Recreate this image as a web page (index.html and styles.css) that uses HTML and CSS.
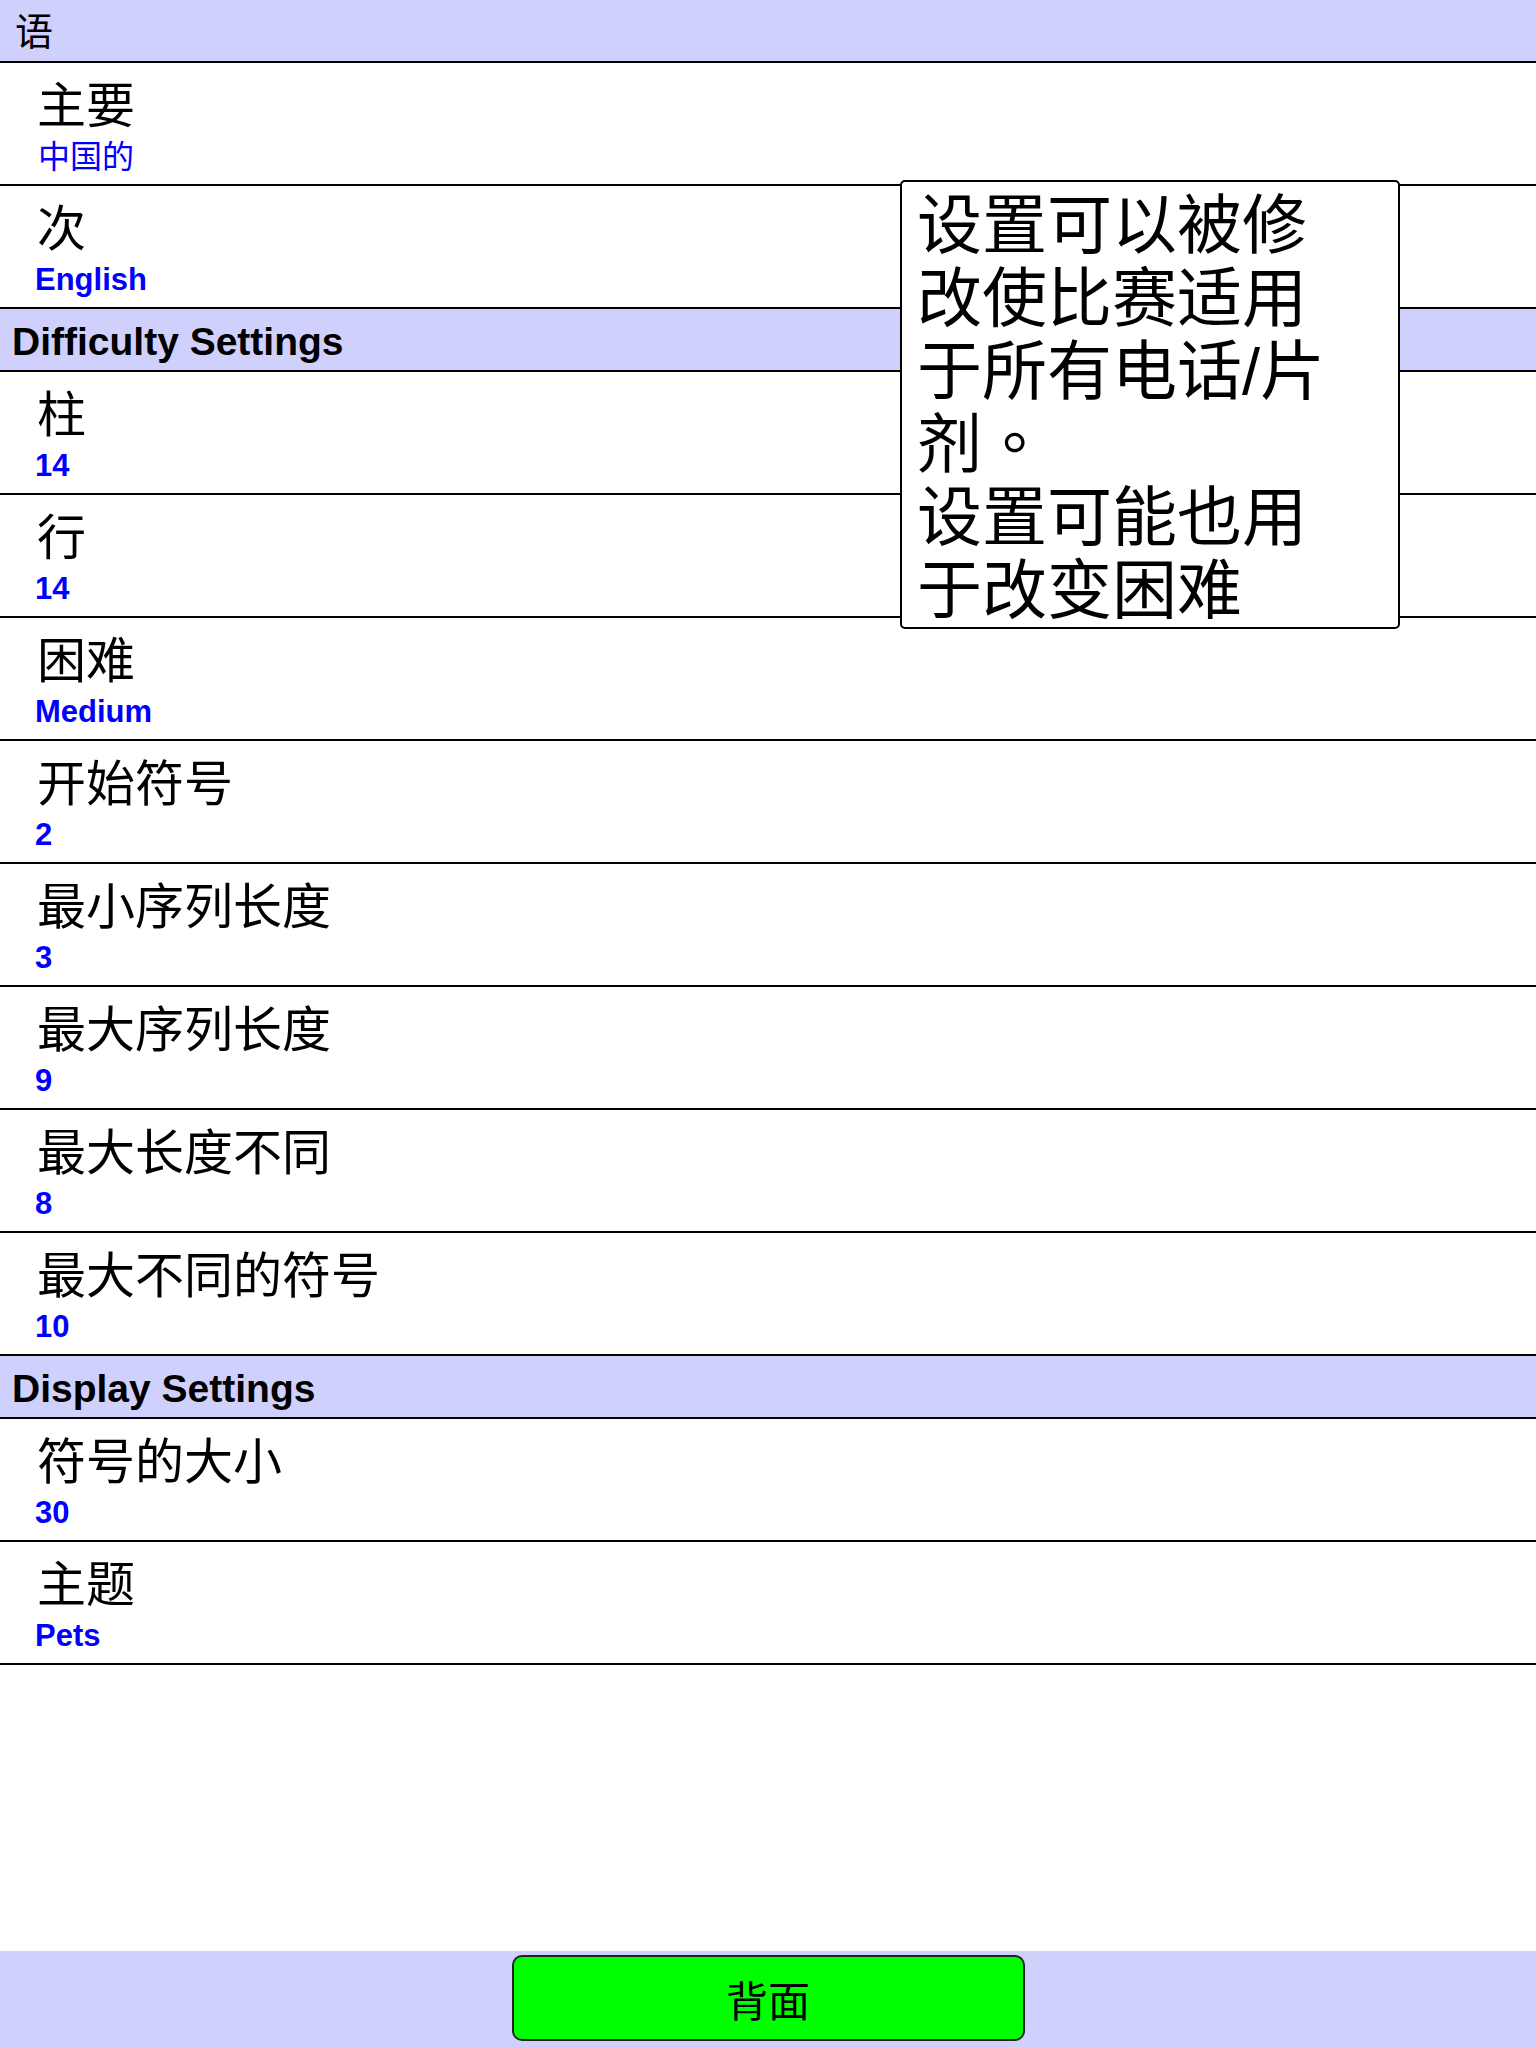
FILE: index.html
```html
<!DOCTYPE html>
<html lang="zh">
<head>
<meta charset="utf-8">
<title>Settings</title>
<link rel="stylesheet" href="styles.css">
</head>
<body>
<div class="page">
  <div class="list">
    <div class="section section-plain">语</div>
    <div class="row"><div class="label">主要</div><div class="value value-plain">中国的</div></div>
    <div class="row"><div class="label">次</div><div class="value">English</div></div>
    <div class="section">Difficulty Settings</div>
    <div class="row"><div class="label">柱</div><div class="value">14</div></div>
    <div class="row"><div class="label">行</div><div class="value">14</div></div>
    <div class="row"><div class="label">困难</div><div class="value">Medium</div></div>
    <div class="row"><div class="label">开始符号</div><div class="value">2</div></div>
    <div class="row"><div class="label">最小序列长度</div><div class="value">3</div></div>
    <div class="row"><div class="label">最大序列长度</div><div class="value">9</div></div>
    <div class="row"><div class="label">最大长度不同</div><div class="value">8</div></div>
    <div class="row"><div class="label">最大不同的符号</div><div class="value">10</div></div>
    <div class="section">Display Settings</div>
    <div class="row"><div class="label">符号的大小</div><div class="value">30</div></div>
    <div class="row"><div class="label">主题</div><div class="value">Pets</div></div>
  </div>
  <div class="tooltip">设置可以被修改使比赛适用于所有电话/片剂<span class="stop" lang="zh-TW">。</span><br>设置可能也用于改变困难</div>
  <div class="footer"><button class="back">背面</button></div>
</div>
</body>
</html>
```
FILE: styles.css
```css
body {
  margin: 0;
  background: #ffffff;
  color: #000000;
  font-family: "Liberation Sans", "Noto Sans CJK SC", sans-serif;
}

.page {
  position: relative;
  min-height: 2048px;
  display: flex;
  flex-direction: column;
}

.list {
  flex: 1;
}

.section {
  box-sizing: border-box;
  height: 63px;
  padding: 4px 0 0 12px;
  line-height: 57px;
  font-size: 39px;
  font-weight: bold;
  background: #d0d0fc;
  border-bottom: 2px solid #000000;
}

.section-plain {
  padding-left: 15px;
  font-size: 38px;
  font-weight: normal;
}

.row {
  box-sizing: border-box;
  height: 123px;
  padding: 14px 0 0 35px;
  border-bottom: 2px solid #000000;
}

.label {
  padding-left: 2px;
  font-size: 49px;
  line-height: 58px;
}

.value {
  font-size: 31px;
  line-height: 44px;
  font-weight: bold;
  color: #0000ff;
}

.value-plain {
  padding-left: 3px;
  font-size: 32px;
  font-weight: normal;
}

.tooltip {
  position: absolute;
  left: 900px;
  top: 180px;
  width: 425px;
  padding: 7px 56px 0 15px;
  font-size: 65px;
  line-height: 73px;
  background: #ffffff;
  border: 2px solid #000000;
  border-radius: 5px;
}

.stop {
  font-family: "Liberation Sans", "Noto Sans CJK TC", sans-serif;
}

.footer {
  box-sizing: border-box;
  height: 97px;
  padding-top: 4px;
  display: flex;
  justify-content: center;
  align-items: flex-start;
  background: #d0d0fc;
}

.back {
  width: 513px;
  height: 86px;
  padding: 0;
  background: #00ff00;
  border: 2px solid #222222;
  border-radius: 10px;
  color: #000000;
  font-family: "Liberation Sans", "Noto Sans CJK SC", sans-serif;
  font-size: 42px;
}
```
